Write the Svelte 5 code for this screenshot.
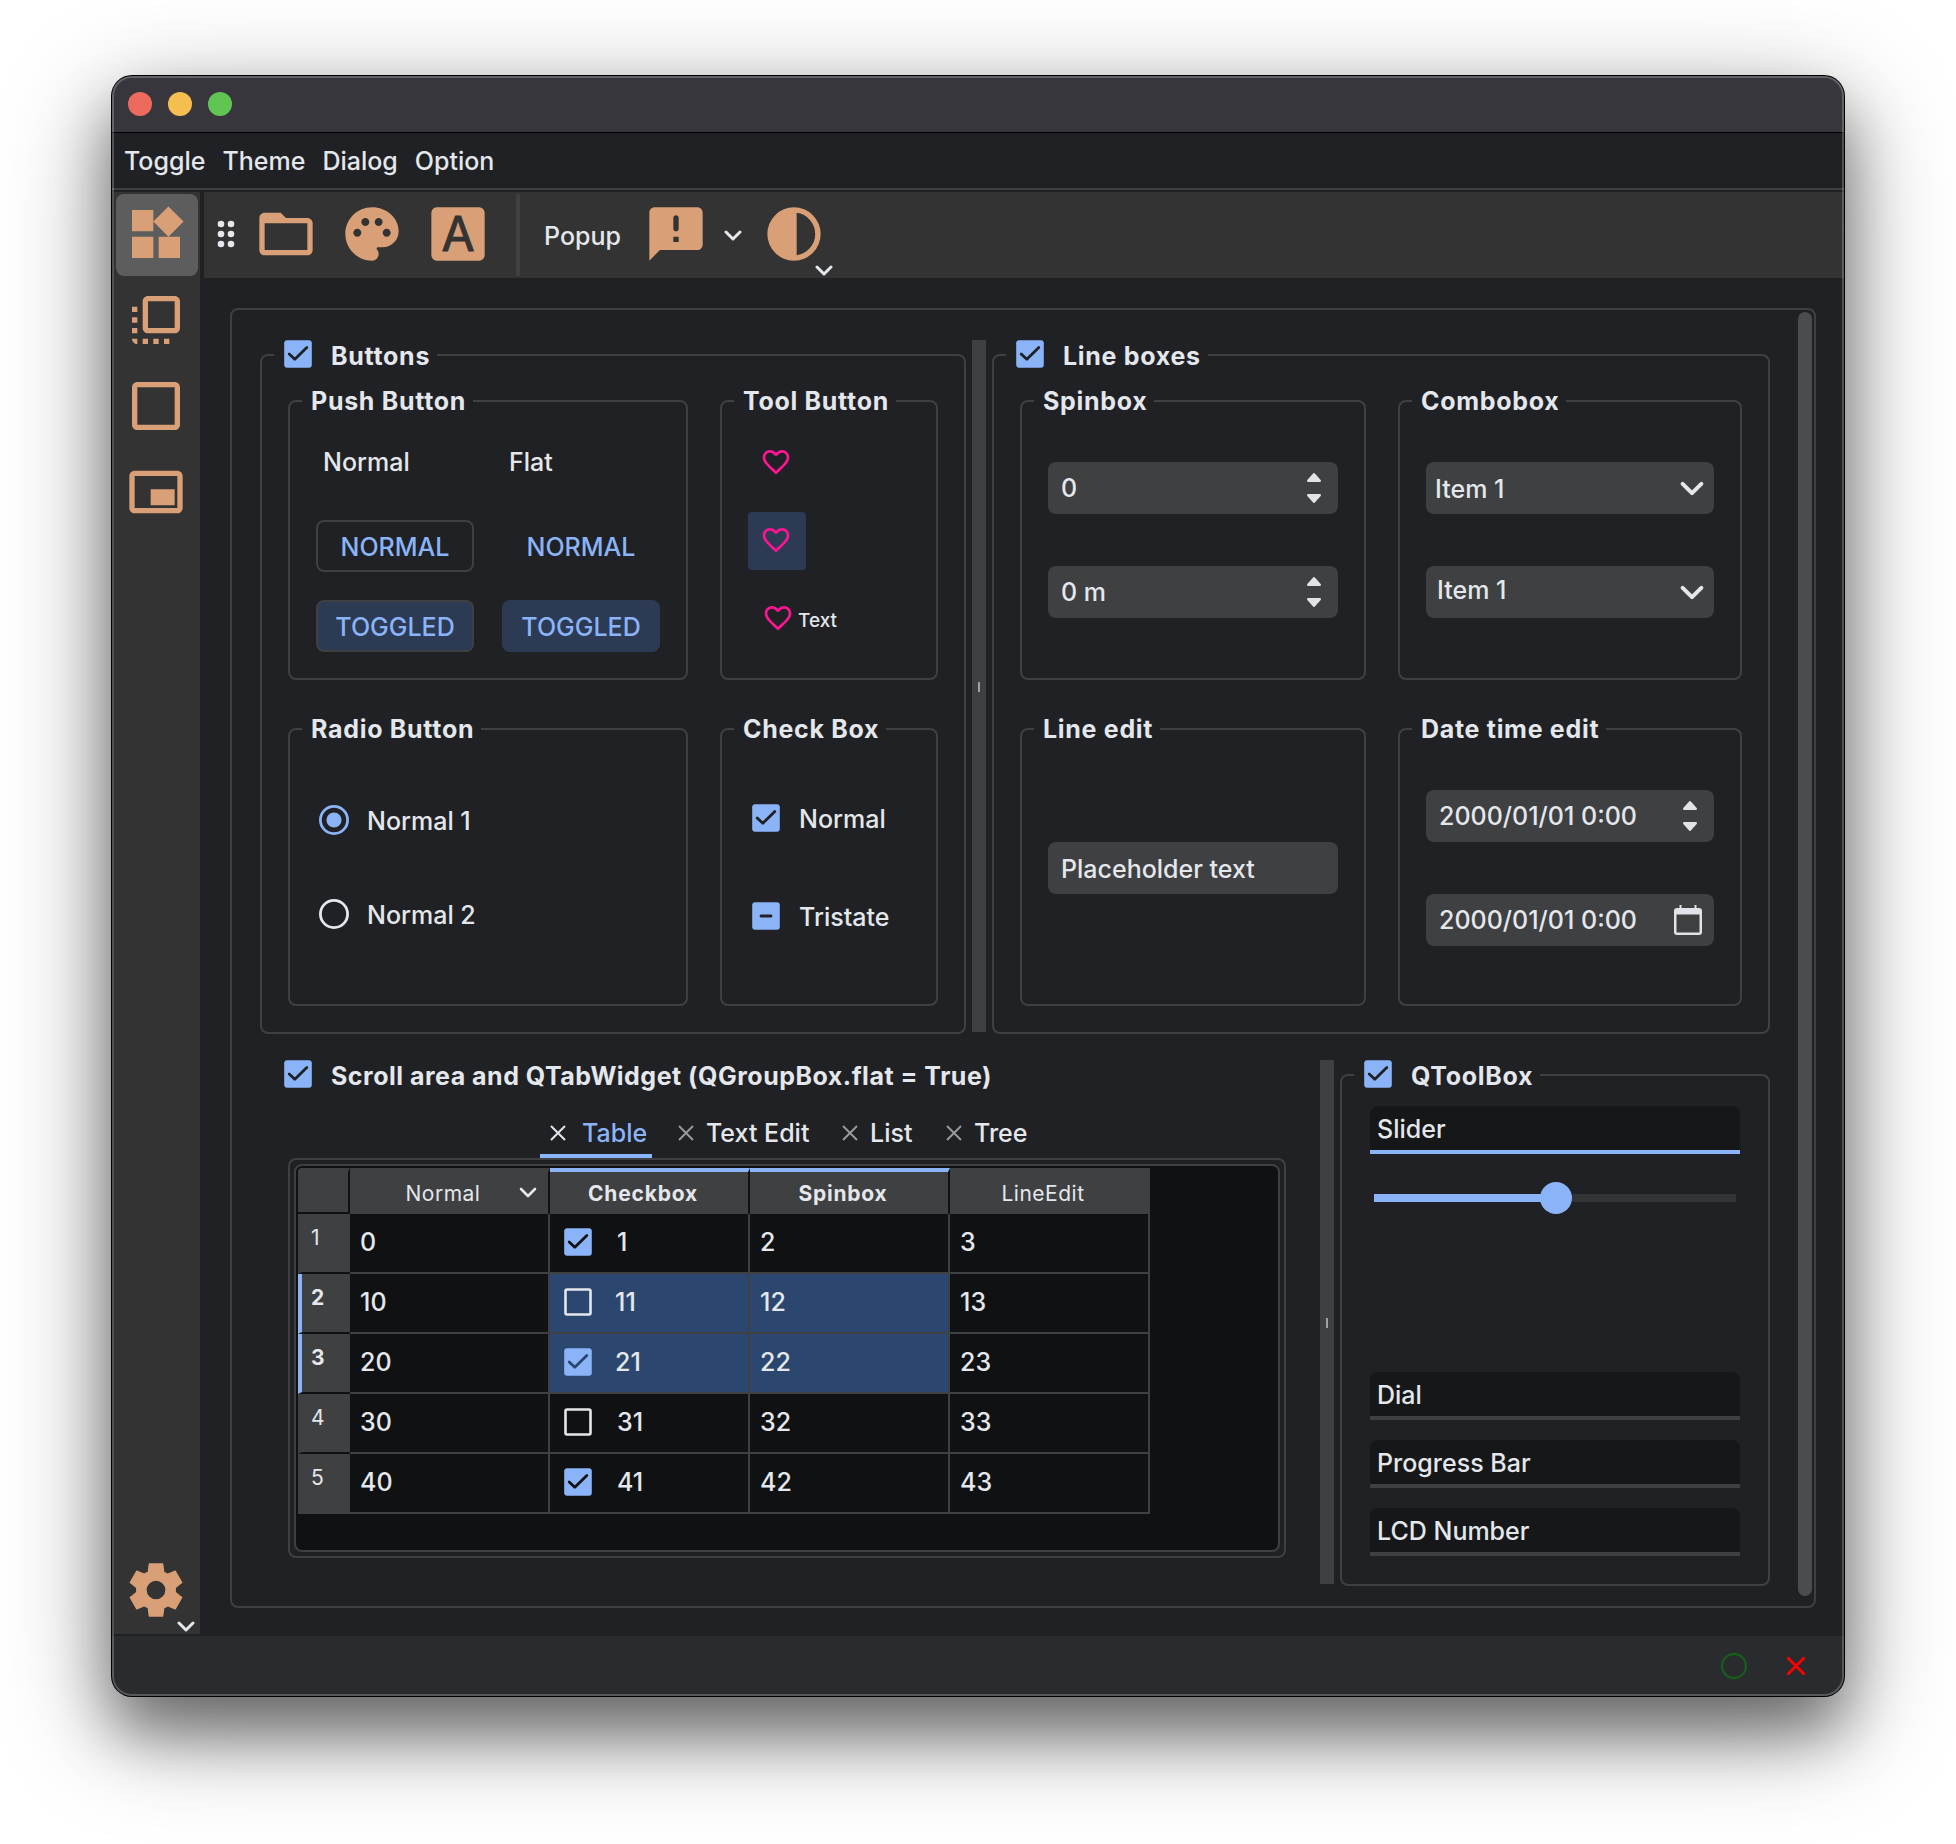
<script>
	const menus = ['Toggle', 'Theme', 'Dialog', 'Option'];
	const tabs = [
		{ name: 'Table', width: 112 },
		{ name: 'Text Edit', width: 148 },
		{ name: 'List', width: 88 },
		{ name: 'Tree', width: 100 }
	];
	const columns = ['Normal', 'Checkbox', 'Spinbox', 'LineEdit'];
	const rows = [0, 10, 20, 30, 40].map((n, i) => ({
		label: i + 1,
		cells: [n, n + 1, n + 2, n + 3],
		checked: i % 2 === 0,
		selected: i === 1 || i === 2
	}));
	const closedPages = ['Dial', 'Progress Bar', 'LCD Number'];

	let activeTab = $state('Table');
	let radio = $state(1);

	// only the two middle columns are part of the selection
	const inSelection = (col) => col === 1 || col === 2;
</script>

{#snippet checkBox(state)}
	<svg class="check" viewBox="0 0 28 28">
		{#if state === 'off'}
			<rect x="1.5" y="1.5" width="25" height="25" rx="1.5" fill="none" stroke="#e4e7eb" stroke-width="2.6" />
		{:else}
			<rect x=".2" y=".2" width="27.6" height="27.6" rx="3" fill="#8ab4f7" />
			{#if state === 'partial'}
				<path d="M9 14h10" class="mark" />
			{:else}
				<path d="M5.2 14 10.8 19.2 22.8 7.4" class="mark" />
			{/if}
		{/if}
	</svg>
{/snippet}

{#snippet chevron(cls)}
	<svg class="chevron {cls}" viewBox="0 0 18 11"><path d="M2 2l7 7 7-7" /></svg>
{/snippet}

{#snippet heart()}
	<svg width="32" height="32" viewBox="0 0 24 24" fill="#ff1493">
		<path
			d="M16.5 3c-1.74 0-3.41.81-4.5 2.09C10.91 3.81 9.24 3 7.5 3 4.42 3 2 5.42 2 8.5c0 3.78 3.4 6.86 8.55 11.54L12 21.35l1.45-1.32C18.6 15.36 22 12.28 22 8.5 22 5.42 19.58 3 16.5 3zm-4.4 15.55l-.1.1-.1-.1C7.14 14.24 4 11.39 4 8.5 4 6.5 5.5 5 7.5 5c1.54 0 3.04.99 3.57 2.36h1.87C13.46 5.99 14.96 5 16.5 5c2 0 3.5 1.5 3.5 3.5 0 2.89-3.14 5.74-7.9 10.05z"
		/>
	</svg>
{/snippet}

{#snippet arrows()}
	<svg class="arrows" width="16" height="32" viewBox="0 0 16 32">
		<path d="M8 2.2 13.8 8.8H2.2z" />
		<path d="M8 29.8 13.8 23.2H2.2z" />
	</svg>
{/snippet}

{#snippet cross()}
	<svg class="cross" width="16" height="16" viewBox="0 0 16 16"><path d="M1 1l14 14M15 1L1 15" /></svg>
{/snippet}

<main class="page">
	<div class="window">
		<header class="titlebar">
			<span class="light red"></span>
			<span class="light yellow"></span>
			<span class="light green"></span>
		</header>
		<nav class="menubar">
			{#each menus as menu}
				<span>{menu}</span>
			{/each}
		</nav>

		<div class="body">
			<aside class="sidebar">
				<button class="tool active" aria-label="Widgets">
					<svg viewBox="0 0 24 24">
						<path d="M13 13v8h8v-8h-8zM3 21h8v-8H3v8zM3 3v8h8V3H3zm13.66-1.31L11 7.34 16.66 13l5.66-5.66-5.66-5.65z" />
					</svg>
				</button>
				<button class="tool" aria-label="Float">
					<svg viewBox="0 0 24 24">
						<path
							d="M3 7h2v2H3zM3 11h2v2H3zM3 15h2v2H3zM3 19h2v2c-1.1 0-2-.9-2-2zM7 19h2v2H7zM11 19h2v2h-2zM15 19h2v2h-2zM19 3H9c-1.1 0-2 .9-2 2v10c0 1.1.9 2 2 2h10c1.1 0 2-.9 2-2V5c0-1.1-.9-2-2-2zm0 12H9V5h10v10z"
						/>
					</svg>
				</button>
				<button class="tool" aria-label="Frame">
					<svg viewBox="0 0 24 24">
						<path d="M19 5v14H5V5h14m0-2H5c-1.1 0-2 .9-2 2v14c0 1.1.9 2 2 2h14c1.1 0 2-.9 2-2V5c0-1.1-.9-2-2-2z" />
					</svg>
				</button>
				<button class="tool" aria-label="Dock">
					<svg viewBox="0 0 24 24">
						<path d="M10 11h9v6h-9zM20 4H4c-1.1 0-2 .9-2 2v12c0 1.1.9 2 2 2h16c1.1 0 2-.9 2-2V6c0-1.1-.9-2-2-2zm0 14H4V6h16v12z" />
					</svg>
				</button>
				<button class="tool settings" aria-label="Settings">
					<svg viewBox="0 0 24 24">
						<path
							fill-rule="evenodd"
							stroke="#d99f76"
							stroke-width=".5"
							stroke-linejoin="round"
							d="M9.5 21.75l-.42-3.1q-.4-.14-.75-.35-.35-.2-.65-.44L4.8 19.05 2.35 14.8l2.48-1.9q-.06-.45-.06-.9t.06-.9L2.35 9.2 4.8 4.95l2.88 1.19q.3-.24.65-.44.35-.21.75-.35l.42-3.1h5l.42 3.1q.4.14.75.35.35.2.65.44l2.88-1.19 2.45 4.25-2.48 1.9q.06.45.06.9t-.06.9l2.48 1.9-2.45 4.25-2.88-1.19q-.3.24-.65.44-.35.21-.75.35l-.42 3.1zM12 15.75a3.75 3.75 0 1 0 0-7.5 3.75 3.75 0 0 0 0 7.5z"
						/>
					</svg>
					{@render chevron('corner')}
				</button>
			</aside>

			<div class="right">
				<div class="toolbar">
					<svg class="grip" width="18" height="28" viewBox="0 0 18 28">
						<circle cx="4" cy="4" r="3.3" /><circle cx="14" cy="4" r="3.3" />
						<circle cx="4" cy="14" r="3.3" /><circle cx="14" cy="14" r="3.3" />
						<circle cx="4" cy="24" r="3.3" /><circle cx="14" cy="24" r="3.3" />
					</svg>
					<button class="tool" aria-label="Open folder">
						<svg viewBox="0 0 24 24">
							<path
								d="M20 6h-8l-2-2H4c-1.1 0-1.99.9-1.99 2L2 18c0 1.1.9 2 2 2h16c1.1 0 2-.9 2-2V8c0-1.1-.9-2-2-2zm0 12H4V8h16v10z"
							/>
						</svg>
					</button>
					<button class="tool" aria-label="Pick color">
						<svg viewBox="0 0 24 24">
							<path
								d="M12 2C6.49 2 2 6.49 2 12s4.49 10 10 10c1.38 0 2.5-1.12 2.5-2.5 0-.61-.23-1.2-.64-1.67-.08-.1-.13-.21-.13-.33 0-.28.22-.5.5-.5H16c3.31 0 6-2.69 6-6 0-4.96-4.49-9-10-9zm5.5 11c-.83 0-1.5-.67-1.5-1.5s.67-1.5 1.5-1.5 1.5.67 1.5 1.5-.67 1.5-1.5 1.5zm-3-4c-.83 0-1.5-.67-1.5-1.5S13.67 6 14.5 6s1.5.67 1.5 1.5S15.33 9 14.5 9zM5 11.5c0-.83.67-1.5 1.5-1.5s1.5.67 1.5 1.5S7.33 13 6.5 13 5 12.33 5 11.5zm6-4c0 .83-.67 1.5-1.5 1.5S8 8.33 8 7.5 8.67 6 9.5 6s1.5.67 1.5 1.5z"
							/>
						</svg>
					</button>
					<button class="tool" aria-label="Pick font">
						<svg viewBox="0 0 24 24">
							<rect x="2" y="2" width="20" height="20" rx="2" />
							<text class="letter" x="12" y="18.2">A</text>
						</svg>
					</button>
					<span class="separator"></span>
					<span class="popup-label">Popup</span>
					<button class="tool popup" aria-label="Popup message">
						<svg viewBox="0 0 24 24">
							<path
								fill-rule="evenodd"
								d="M20 2H4c-1.1 0-2 .9-2 2v18l4-4h14c1.1 0 2-.9 2-2V4c0-1.1-.9-2-2-2zM12 5c-.55 0-1 .45-1 1v4c0 .55.45 1 1 1s1-.45 1-1V6c0-.55-.45-1-1-1zM11 13v2h2v-2z"
							/>
						</svg>
					</button>
					{@render chevron('')}
					<button class="tool contrast" aria-label="Contrast">
						<svg viewBox="0 0 24 24">
							<path fill-rule="evenodd" d="M12 2a10 10 0 1 0 0 20 10 10 0 0 0 0-20zM13 4.07a8 8 0 0 1 0 15.86z" />
						</svg>
						{@render chevron('corner')}
					</button>
				</div>

				<div class="frame">
					<div class="content">
						<div class="row top">
							<fieldset class="group">
								<legend class="checkable">{@render checkBox('on')}<span>Buttons</span></legend>
								<div class="quad buttons">
									<fieldset>
										<legend>Push Button</legend>
										<div class="push">
											<span>Normal</span>
											<span>Flat</span>
											<button>NORMAL</button>
											<button class="flat">NORMAL</button>
											<button class="toggled">TOGGLED</button>
											<button class="flat toggled">TOGGLED</button>
										</div>
									</fieldset>
									<fieldset>
										<legend>Tool Button</legend>
										<div class="hearts">
											<button aria-label="Like">{@render heart()}</button>
											<button class="toggled" aria-label="Liked">{@render heart()}</button>
											<button class="with-text">{@render heart()}<span>Text</span></button>
										</div>
									</fieldset>
									<fieldset>
										<legend>Radio Button</legend>
										<div class="radios">
											{#each [1, 2] as n}
												<button class:on={radio === n} onclick={() => (radio = n)}>
													<svg width="30" height="30" viewBox="0 0 30 30">
														<circle cx="15" cy="15" r="13.6" fill="none" stroke="currentColor" stroke-width="2.8" />
														{#if radio === n}<circle cx="15" cy="15" r="7.6" fill="currentColor" />{/if}
													</svg>
													<span>Normal {n}</span>
												</button>
											{/each}
										</div>
									</fieldset>
									<fieldset>
										<legend>Check Box</legend>
										<div class="checks">
											<div>{@render checkBox('on')}<span>Normal</span></div>
											<div>{@render checkBox('partial')}<span>Tristate</span></div>
										</div>
									</fieldset>
								</div>
							</fieldset>

							<div class="splitter"><i></i></div>

							<fieldset class="group grow">
								<legend class="checkable">{@render checkBox('on')}<span>Line boxes</span></legend>
								<div class="quad lines">
									<fieldset>
										<legend>Spinbox</legend>
										<div class="fields">
											<div class="field"><span>0</span>{@render arrows()}</div>
											<div class="field"><span>0 m</span>{@render arrows()}</div>
										</div>
									</fieldset>
									<fieldset>
										<legend>Combobox</legend>
										<div class="fields">
											<div class="field combo"><span>Item 1</span>{@render chevron('big')}</div>
											<div class="field combo editable"><span>Item 1</span>{@render chevron('big')}</div>
										</div>
									</fieldset>
									<fieldset>
										<legend>Line edit</legend>
										<div class="fields single">
											<div class="field"><span>Placeholder text</span></div>
										</div>
									</fieldset>
									<fieldset>
										<legend>Date time edit</legend>
										<div class="fields">
											<div class="field date"><span>2000/01/01 0:00</span>{@render arrows()}</div>
											<div class="field date">
												<span>2000/01/01 0:00</span>
												<svg class="calendar" width="28" height="30" viewBox="0 0 28 30">
													<path
														fill-rule="evenodd"
														d="M5.5 0h2v3h13V0h2v3H25a3 3 0 0 1 3 3v21a3 3 0 0 1-3 3H3a3 3 0 0 1-3-3V6a3 3 0 0 1 3-3h2.500zM2.500 9.500v18h23v-18z"
													/>
												</svg>
											</div>
										</div>
									</fieldset>
								</div>
							</fieldset>
						</div>

						<div class="row bottom">
							<section class="flat-group">
								<h2 class="checkable">{@render checkBox('on')}<span>Scroll area and QTabWidget (QGroupBox.flat = True)</span></h2>
								<div class="tabs">
									{#each tabs as tab}
										<button
											class:active={activeTab === tab.name}
											style="width: {tab.width}px"
											onclick={() => (activeTab = tab.name)}
										>
											{@render cross()}<span>{tab.name}</span>
										</button>
									{/each}
								</div>
								<div class="pane">
									<div class="view">
										<table>
											<thead>
												<tr>
													<th class="corner-cell"></th>
													{#each columns as column, c}
														<th class:selected={inSelection(c)}>
															<span>{column}</span>
															{#if c === 0}{@render chevron('sort')}{/if}
														</th>
													{/each}
												</tr>
											</thead>
											<tbody>
												{#each rows as row}
													<tr class:selected={row.selected}>
														<th>{row.label}</th>
														{#each row.cells as value, c}
															<td class:selected={row.selected && inSelection(c)}>
																<div>
																	{#if c === 1}{@render checkBox(row.checked ? 'on' : 'off')}{/if}
																	<span>{value}</span>
																</div>
															</td>
														{/each}
													</tr>
												{/each}
											</tbody>
										</table>
									</div>
								</div>
							</section>

							<div class="splitter"><i></i></div>

							<fieldset class="group grow">
								<legend class="checkable">{@render checkBox('on')}<span>QToolBox</span></legend>
								<div class="toolbox">
									<div class="page-tab open">Slider</div>
									<div class="slider-page">
										<div class="slider"><span class="fill"></span><span class="handle"></span><span class="rest"></span></div>
									</div>
									{#each closedPages as name}
										<div class="page-tab">{name}</div>
									{/each}
								</div>
							</fieldset>
						</div>
					</div>
					<div class="scrollbar"></div>
				</div>
			</div>
		</div>

		<footer class="statusbar">
			<svg width="28" height="28" viewBox="0 0 28 28" fill="none" stroke="#175c1b" stroke-width="2.4">
				<circle cx="14" cy="14" r="12" />
			</svg>
			<svg width="20" height="20" viewBox="0 0 20 20" fill="none" stroke="#f00" stroke-width="2.8">
				<path d="M1.500 1.500l17 17M18.500 1.500l-17 17" />
			</svg>
		</footer>
	</div>
</main>

<style>
	:global(body) {
		margin: 0;
		background: #fff;
	}
	* {
		box-sizing: border-box;
	}
	svg {
		display: block;
		flex: none;
	}
	button {
		padding: 0;
		border: none;
		background: none;
		color: inherit;
		font: inherit;
		text-align: left;
	}
	.page {
		width: 1956px;
		height: 1844px;
		padding: 76px 112px 0;
		overflow: hidden;
		font-family: Inter, 'Liberation Sans', sans-serif;
		font-size: 25px;
		font-weight: 450;
		line-height: 30px;
		color: #e4e7eb;
	}
	.window {
		position: relative;
		height: 1620px;
		border-radius: 20px;
		background: #202124;
		box-shadow:
			0 0 0 1px #000,
			0 36px 60px rgba(0, 0, 0, 0.4),
			0 30px 110px rgba(0, 0, 0, 0.4);
		overflow: hidden;
	}
	/* light rim drawn over the window edge */
	.window::after {
		content: '';
		position: absolute;
		inset: 0;
		border: 2px solid rgba(255, 255, 255, 0.22);
		border-radius: 20px;
		pointer-events: none;
	}
	.titlebar {
		display: flex;
		align-items: center;
		gap: 16px;
		height: 56px;
		padding-left: 16px;
		background: #37363d;
	}
	.light {
		width: 24px;
		height: 24px;
		border-radius: 50%;
	}
	.red {
		background: #ed6a5e;
	}
	.yellow {
		background: #f5bf4f;
	}
	.green {
		background: #61c554;
	}
	.menubar {
		display: flex;
		align-items: center;
		gap: 17px;
		height: 58px;
		padding: 1px 0 0 12px;
		border-top: 1px solid #000;
		border-bottom: 2px solid #3f4042;
	}
	.body {
		display: flex;
		gap: 4px;
		height: 1442px;
		margin: 2px 0 0 2px;
	}
	.sidebar {
		display: flex;
		flex-direction: column;
		gap: 4px;
		width: 86px;
		padding: 2px;
		background: #333;
	}
	.tool {
		position: relative;
		display: flex;
		justify-content: center;
		flex: none;
		width: 82px;
		height: 82px;
		padding: 8px 2px 0 0;
		border-radius: 8px;
	}
	.tool > svg:first-child {
		width: 64px;
		height: 64px;
		fill: #d99f76;
	}
	.tool.active {
		background: #5d5d5d;
	}
	.settings {
		margin-top: auto;
	}
	.chevron {
		width: 18px;
		height: 11px;
		fill: none;
		stroke: #e4e7eb;
		stroke-width: 3;
		stroke-linecap: round;
		stroke-linejoin: round;
	}
	.corner {
		position: absolute;
		right: 3px;
		bottom: 0;
	}
	.letter {
		font-size: 18px;
		font-weight: 400;
		text-anchor: middle;
		fill: #333;
		stroke: #333;
		stroke-width: 0.35;
		stroke-linejoin: round;
	}
	.right {
		flex: 1;
		display: flex;
		flex-direction: column;
	}
	.toolbar {
		display: flex;
		align-items: center;
		height: 86px;
		padding-left: 13px;
		background: #333;
	}
	.toolbar .tool {
		margin-right: 4px;
	}
	.grip {
		margin: 0 11px 2px 0;
		fill: #e4e7eb;
	}
	.separator {
		width: 4px;
		height: 82px;
		margin: 0 24px 0 12px;
		background: #3f4042;
	}
	.popup-label {
		width: 92px;
		padding-top: 2px;
	}
	.toolbar .popup {
		margin-right: 6px;
	}
	.toolbar .contrast {
		margin-left: 12px;
	}
	.frame {
		flex: 1;
		display: flex;
		margin: 30px 28px 26px 26px;
		border: 2px solid #3f4042;
		border-radius: 8px;
	}
	.content {
		width: 1510px;
		margin: 30px 28px 20px 28px;
	}
	.scrollbar {
		width: 14px;
		margin: 2px 0 10px;
		border-radius: 7px;
		background: #4b4c4e;
	}
	.row {
		display: flex;
		gap: 6px;
	}
	.top {
		height: 694px;
		margin-bottom: 26px;
	}
	.bottom {
		height: 526px;
	}
	.splitter {
		display: flex;
		align-items: center;
		justify-content: center;
		width: 14px;
		margin-bottom: 2px;
		padding-top: 2px;
		background: #3f4042;
	}
	.splitter i {
		width: 2px;
		height: 10px;
		background: #a0a1a3;
	}

	fieldset {
		min-width: 0;
		margin: 0;
		padding: 0;
		border: 2px solid #3f4042;
		border-radius: 8px;
	}
	legend {
		height: 30px;
		margin-left: 12px;
		padding: 0 7px 0 9px;
		font-weight: 700;
		letter-spacing: 0.7px;
		white-space: nowrap;
	}
	.checkable {
		display: flex;
		gap: 19px;
		padding-left: 10px;
	}
	.checkable span {
		padding-top: 1px;
	}
	.group {
		width: 706px;
	}
	.grow {
		flex: 1;
	}
	.quad {
		display: grid;
		grid-template-rows: 294px 292px;
		gap: 34px 32px;
		padding: 16px 26px 0;
	}
	.buttons {
		grid-template-columns: 400px 218px;
	}
	.lines {
		grid-template-columns: 346px 344px;
	}
	.check {
		width: 28px;
		height: 28px;
	}
	.mark {
		fill: none;
		stroke: #202124;
		stroke-width: 2.8;
		stroke-linecap: round;
		stroke-linejoin: round;
	}

	.push {
		display: grid;
		grid-template-columns: 158px 158px;
		gap: 28px;
		padding: 20px 0 0 26px;
	}
	.push span {
		height: 56px;
		padding: 11px 0 0 7px;
	}
	.push button {
		height: 52px;
		padding-top: 2px;
		border: 2px solid #3f4042;
		border-radius: 8px;
		color: #8ab4f7;
		text-align: center;
	}
	.push .flat {
		border-color: transparent;
	}
	.toggled {
		background: #2d3a54;
	}
	.push .flat.toggled {
		border-color: #2d3a54;
	}
	.hearts {
		display: grid;
		gap: 20px;
		padding: 18px 0 0 26px;
	}
	.hearts button {
		display: flex;
		width: 58px;
		height: 58px;
		padding: 12px;
		border-radius: 4px;
	}
	.hearts .with-text {
		width: 104px;
		padding-left: 14px;
		gap: 4px;
		font-size: 19px;
		line-height: 37px;
	}
	.radios,
	.checks {
		display: grid;
		gap: 64px;
		padding: 61px 0 0 29px;
	}
	.radios button,
	.checks div {
		display: flex;
		align-items: center;
		gap: 18px;
		height: 30px;
	}
	.radios span,
	.checks span {
		padding-top: 2px;
	}
	.radios .on svg {
		color: #8ab4f7;
	}
	.checks {
		gap: 70px;
		padding: 60px 0 0 30px;
	}
	.checks div {
		gap: 19px;
		height: 28px;
	}

	.fields {
		display: grid;
		gap: 52px;
		padding: 46px 26px 0;
	}
	.single {
		padding-top: 98px;
	}
	.single span {
		padding-top: 1px;
	}
	.field {
		display: flex;
		align-items: center;
		justify-content: space-between;
		height: 52px;
		padding: 0 16px 0 13px;
		border-radius: 8px;
		background: #3f4042;
	}
	.field.combo {
		padding: 1px 10px 0 9px;
	}
	.field.editable {
		padding-left: 11px;
	}
	.editable span {
		padding-bottom: 5px;
	}
	.arrows {
		fill: #e0e3e8;
		stroke: #e0e3e8;
		stroke-width: 2.4;
		stroke-linejoin: round;
	}
	.big {
		width: 24px;
		height: 15px;
	}
	.field.date {
		padding-left: 13px;
	}
	.calendar {
		margin-right: -4px;
		fill: #e0e3e8;
	}

	.flat-group {
		width: 1054px;
		padding-left: 28px;
	}
	h2.checkable {
		height: 30px;
		margin: 0;
		padding: 0;
		margin-left: -4px;
		font-size: 25px;
		font-weight: 700;
		letter-spacing: 0.5px;
	}
	.tabs {
		display: flex;
		gap: 16px;
		margin-top: 16px;
		padding-left: 252px;
	}
	.tabs button {
		display: flex;
		align-items: center;
		gap: 12px;
		height: 52px;
		padding: 5px 0 0 10px;
		border-bottom: 4px solid transparent;
		white-space: nowrap;
	}
	.tabs .active {
		gap: 16px;
		color: #8ab4f7;
		border-color: #8ab4f7;
	}
	.cross {
		fill: none;
		stroke: #97999c;
		stroke-width: 2;
	}
	.active .cross {
		stroke: #e4e7eb;
	}
	.pane {
		width: 998px;
		height: 400px;
		padding: 4px;
		border: 2px solid #3f4042;
		border-radius: 8px;
	}
	.view {
		height: 388px;
		padding: 2px;
		border: 2px solid #3f4042;
		border-radius: 8px;
		background: #101113;
	}
	table {
		width: 852px;
		table-layout: fixed;
		border-spacing: 0;
	}
	th,
	td {
		padding: 0;
	}
	thead th {
		position: relative;
		width: 200px;
		height: 46px;
		padding: 1px 12px 0 0;
		border-top: 4px solid #3f4042;
		border-right: 2px solid #101113;
		background: #3f4042;
		font-size: 21px;
		font-weight: 400;
		letter-spacing: 0.5px;
	}
	thead th:last-child {
		border-right-color: #3f4042;
	}
	thead .selected {
		border-top-color: #8ab4f7;
		font-weight: 700;
		letter-spacing: 0.8px;
	}
	thead .corner-cell {
		width: 52px;
		border-bottom: 2px solid #101113;
		border-radius: 4px 0 0;
	}
	.sort {
		position: absolute;
		top: 15px;
		right: 11px;
		stroke-width: 2.6;
	}
	tbody th {
		height: 60px;
		padding: 9px 0 0 9px;
		border-left: 4px solid #3f4042;
		border-bottom: 2px solid #101113;
		background: #3f4042;
		font-size: 21px;
		font-weight: 400;
		text-align: left;
		vertical-align: top;
	}
	tbody tr:last-child th {
		border-bottom-color: #3f4042;
	}
	.selected th {
		border-left-color: #8ab4f7;
		font-weight: 700;
	}
	td {
		border-right: 2px solid #3f4042;
		border-bottom: 2px solid #3f4042;
	}
	td div {
		display: flex;
		align-items: center;
		gap: 25px;
		height: 58px;
		padding: 0 0 2px 10px;
	}
	td:nth-child(3) div {
		padding-left: 14px;
	}
	td.selected {
		background: #2c476f;
	}
	td.selected div {
		gap: 23px;
	}
	td .mark {
		stroke: #101113;
	}
	td.selected .mark {
		stroke: #2c476f;
	}

	.toolbox {
		padding: 16px 28px 0;
	}
	.page-tab {
		height: 48px;
		margin-bottom: 20px;
		padding: 8px 0 0 7px;
		border-bottom: 4px solid #3f4042;
		border-radius: 8px 8px 0 0;
		background: #161719;
	}
	.page-tab.open {
		margin: 0;
		border-color: #8ab4f7;
	}
	.slider-page {
		height: 218px;
		padding: 28px 4px 0;
	}
	.slider {
		display: flex;
		align-items: center;
	}
	.fill {
		width: 182px;
		height: 8px;
		margin-right: -16px;
		background: #8ab4f7;
	}
	.handle {
		width: 32px;
		height: 32px;
		border-radius: 50%;
		background: #8ab4f7;
	}
	.rest {
		flex: 1;
		height: 8px;
		background: #323335;
	}

	.statusbar {
		display: flex;
		align-items: center;
		justify-content: flex-end;
		gap: 38px;
		height: 60px;
		margin-top: 2px;
		padding-right: 38px;
		background: #2a2b2e;
	}
</style>
